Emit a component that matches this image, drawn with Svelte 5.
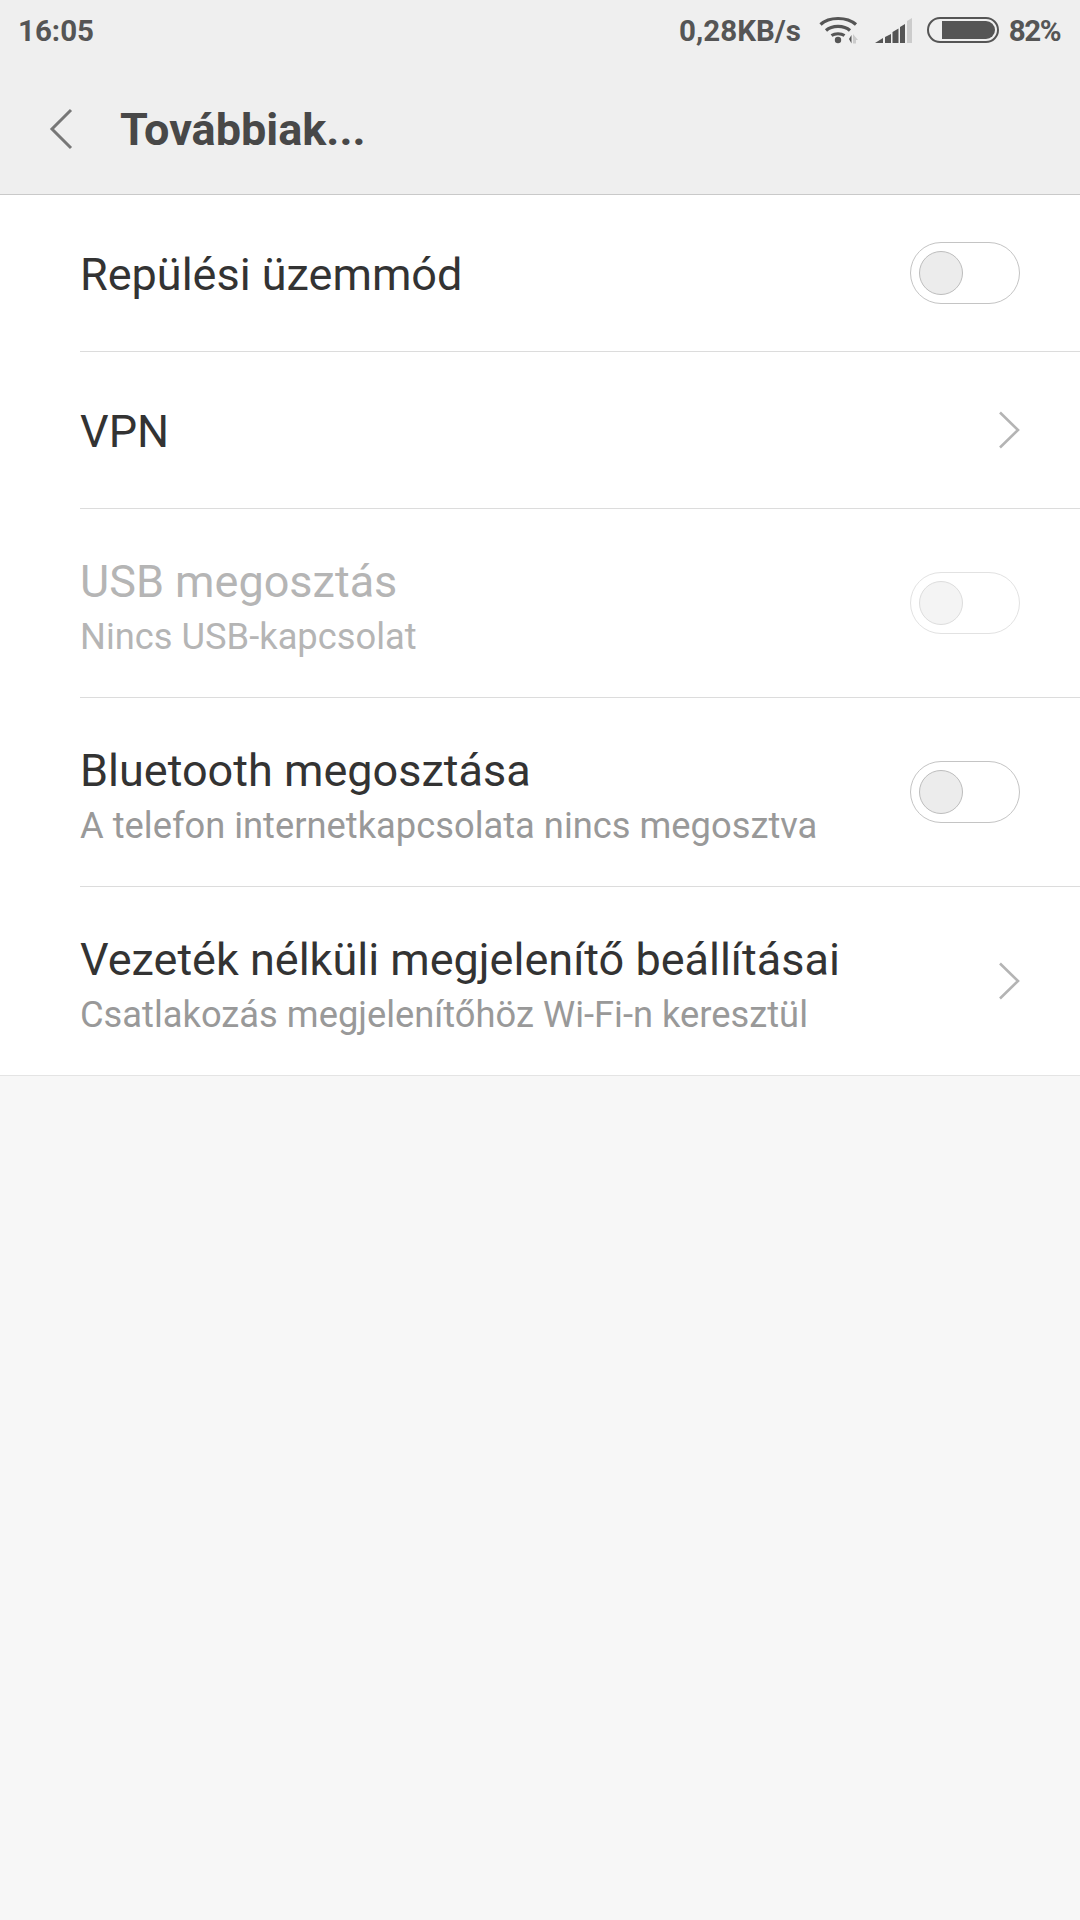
<script>
  const rows = [
    { title: "Repülési üzemmód", control: "toggle" },
    { title: "VPN", control: "arrow" },
    { title: "USB megosztás", sub: "Nincs USB-kapcsolat", control: "toggle", disabled: true },
    { title: "Bluetooth megosztása", sub: "A telefon internetkapcsolata nincs megosztva", control: "toggle" },
    { title: "Vezeték nélküli megjelenítő beállításai", sub: "Csatlakozás megjelenítőhöz Wi-Fi-n keresztül", control: "arrow" }
  ];
</script>

<div class="page">
  <header class="top">
    <div class="status">
      <span class="time">16:05</span>
      <div class="status-right">
        <span class="speed">0,28KB/s</span>
        <svg class="wifi" width="40" height="28" viewBox="0 0 40 28">
          <path d="M1.500 8.500C10 .5 28 .5 37 8.500" fill="none" stroke="#555" stroke-width="3.200" />
          <path d="M7 14.500C13 9 25 9 31 14.500" fill="none" stroke="#555" stroke-width="3.200" />
          <path d="M12.500 19.500C16 17 22 17 25.500 19.500" fill="none" stroke="#555" stroke-width="3" />
          <circle cx="19" cy="24" r="3.200" fill="#555" />
          <path d="M30 23l2.500-4v8.500z" fill="#555" />
          <path d="M34 18l5 6h-2v3.500h-3z" fill="#ccc" />
        </svg>
        <svg class="signal" width="38" height="26" viewBox="0 0 38 26">
          <path d="M0 26l8-5v5zM10 26v-6l6-3v9zM17.500 26V15l6-3.500V26zM25 26V10l5-3v19z" fill="#555" />
          <path d="M32 26V4l5-3v25z" fill="#ccc" />
        </svg>
        <div class="battery"><div class="level"></div></div>
        <span class="percent">82%</span>
      </div>
    </div>
    <div class="nav">
      <svg class="back" width="24" height="42" viewBox="0 0 24 42">
        <path d="M22 2L3 21l19 19" fill="none" stroke="#777" stroke-width="3" />
      </svg>
      <h1>Továbbiak...</h1>
    </div>
  </header>

  <main class="list">
    {#each rows as row}
      <div class="row" class:disabled={row.disabled} class:two={row.sub}>
        <div class="text">
          <div class="title">{row.title}</div>
          {#if row.sub}
            <div class="sub">{row.sub}</div>
          {/if}
        </div>
        {#if row.control === "toggle"}
          <div class="toggle"><div class="knob"></div></div>
        {:else}
          <svg class="arrow" width="22" height="38" viewBox="0 0 22 38">
            <path d="M2 1.500L20 19 2 36.500" fill="none" stroke="#b4b4b4" stroke-width="2.600" />
          </svg>
        {/if}
      </div>
    {/each}
  </main>
</div>

<style>
  :global(body) {
    margin: 0;
    background: #f7f7f7;
  }

  .page {
    width: 1080px;
    height: 1920px;
    background: #f7f7f7;
    font-family: Roboto, sans-serif;
    overflow: hidden;
  }

  .top {
    height: 194px;
    background: #efefef;
    border-bottom: 1px solid #c9c9c9;
  }

  .status {
    height: 60px;
    padding: 0 20px 0 18px;
    display: flex;
    align-items: center;
    justify-content: space-between;
    font-size: 29.500px;
    font-weight: 700;
    color: #555;
  }

  .time,
  .speed,
  .percent {
    padding-top: 2px;
  }

  .status-right {
    display: flex;
    align-items: center;
  }

  .wifi {
    margin-left: 18px;
  }

  .signal {
    margin-left: 16px;
  }

  .battery {
    margin-left: 14px;
    width: 72px;
    height: 26px;
    box-sizing: border-box;
    border: 2px solid #555;
    border-radius: 13px;
    padding: 2px 2px 2px 13px;
    display: flex;
  }

  .level {
    flex: 1;
    background: #555;
    border-radius: 0 9px 9px 0;
  }

  .percent {
    margin-left: 10px;
    letter-spacing: -1.500px;
  }

  .nav {
    height: 134px;
    padding: 4px 0 0 49px;
    box-sizing: border-box;
    display: flex;
    align-items: center;
  }

  .nav h1 {
    margin: 0 0 0 47px;
    font-size: 45px;
    font-weight: 700;
    color: #484848;
  }

  .list {
    background: #fff;
    border-bottom: 1px solid #e4e4e4;
  }

  .row {
    height: 156px;
    margin-left: 80px;
    padding-right: 60px;
    display: flex;
    align-items: center;
    justify-content: space-between;
    border-bottom: 1px solid #dcdcdc;
  }

  .row.two {
    height: 188px;
  }

  .row:last-child {
    border-bottom: none;
  }

  .text {
    padding-top: 3px;
  }

  .two .text {
    padding-top: 6px;
  }

  .title {
    font-size: 45px;
    color: #333;
  }

  .sub {
    margin-top: 7px;
    font-size: 36.300px;
    color: #999;
  }

  .disabled .title,
  .disabled .sub {
    color: #b5b5b5;
  }

  .toggle {
    width: 110px;
    height: 62px;
    box-sizing: border-box;
    border: 1px solid #c4c4c4;
    border-radius: 31px;
    padding: 8px;
    background: #fff;
  }

  .knob {
    width: 44px;
    height: 44px;
    box-sizing: border-box;
    border: 1px solid #bdbdbd;
    border-radius: 50%;
    background: #ececec;
  }

  .disabled .toggle {
    border-color: #e2e2e2;
  }

  .disabled .knob {
    border-color: #ddd;
    background: #f4f4f4;
  }
</style>
